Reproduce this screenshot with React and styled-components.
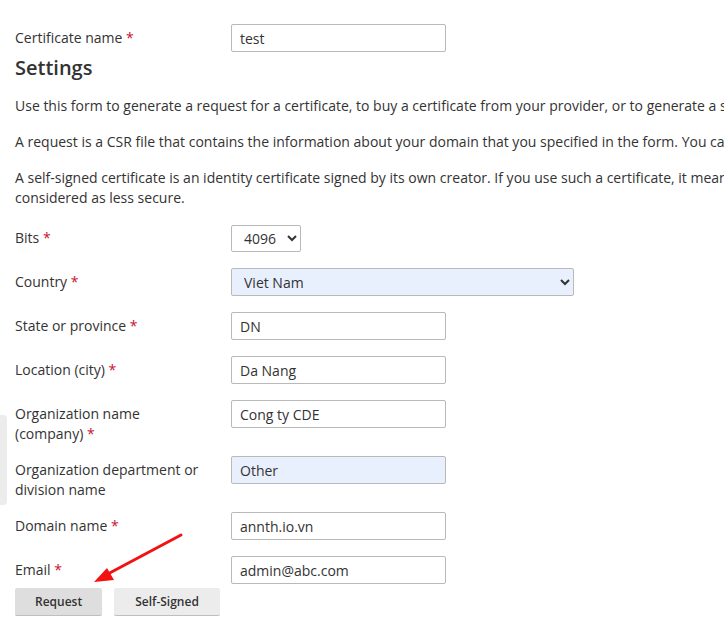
import styled, { createGlobalStyle } from "styled-components"

const Global = createGlobalStyle`
body {
    margin: 0;
    overflow: hidden;
    background: #fff;
    font-family: "Open Sans", "Liberation Sans", sans-serif;
    color: #333;
}
`

export const Page = styled.div`
position: relative;
width: 1100px;
padding: 24px 15px 20px 15px;
box-sizing: border-box;
font-size: 14px;
line-height: 20px;
`

export const Row = styled.div`
display: flex;
align-items: flex-start;
min-height: 32px;
padding-bottom: ${props => (props.last ? "0" : "12px")};
`

export const Label = styled.div`
width: 216px;
padding-top: 4px;
flex-shrink: 0;
span{
    color: #c8102e;
}
`

export const Input = styled.input`
width: 215px;
height: 28px;
box-sizing: border-box;
border: 1px solid #b9b9b9;
border-radius: 2px;
padding: 0 8px;
font-family: inherit;
font-size: 14px;
color: #333;
background: ${props => (props.filled ? "#e8f0fe" : "#fff")};
outline: none;
`

export const Select = styled.select`
width: ${props => props.w}px;
height: ${props => props.h || 28}px;
margin-top: ${props => props.offset || 0}px;
box-sizing: border-box;
border: 1px solid #b9b9b9;
border-radius: 2px;
padding: 0 4px 0 8px;
font-family: inherit;
font-size: 14px;
color: #333;
background: ${props => (props.filled ? "#e8f0fe" : "#fff")};
outline: none;
`

export const Heading = styled.h2`
margin: 0 0 16px 0;
font-size: 20px;
line-height: 24px;
font-weight: 600;
`

export const Para = styled.p`
margin: 0 0 16px 0;
width: ${props => props.w || "auto"};
`

export const Fields = styled.div`
margin-top: 16px;
`

export const Buttons = styled.div`
display: flex;
gap: 12px;
`

export const Button = styled.button`
height: 28px;
padding: 0 ${props => props.px}px;
border: none;
border-bottom: 1px solid #bfbfbf;
border-radius: 2px;
background-color: ${props => (props.primary ? "#dedede" : "#ececec")};
font-family: inherit;
font-size: 12px;
font-weight: 600;
color: #333;
`

export const SideTab = styled.div`
position: absolute;
left: 0;
top: 415px;
width: 7px;
height: 90px;
background: #ececec;
border-radius: 0 4px 4px 0;
`

export const Arrow = styled.svg`
position: absolute;
left: 0;
top: 0;
pointer-events: none;
`

const Req = () => <span> *</span>

export default function App(){
    return(<><Global />
    <Page>
        <Row last>
            <Label>Certificate name<Req /></Label>
            <Input defaultValue="test" />
        </Row>
        <Heading>Settings</Heading>
        <Para>Use this form to generate a request for a certificate, to buy a certificate from your provider, or to generate a self-signed certificate.</Para>
        <Para>A request is a CSR file that contains the information about your domain that you specified in the form. You can submit it to a certificate authority.</Para>
        <Para w="900px">A self-signed certificate is an identity certificate signed by its own creator. If you use such a certificate, it means that your website is considered as less secure.</Para>
        <Fields>
            <Row>
                <Label>Bits<Req /></Label>
                <Select w={70} h={27} offset={1} defaultValue="4096"><option>2048</option><option>4096</option></Select>
            </Row>
            <Row>
                <Label>Country<Req /></Label>
                <Select w={343} filled defaultValue="Viet Nam"><option>Viet Nam</option></Select>
            </Row>
            <Row>
                <Label>State or province<Req /></Label>
                <Input defaultValue="DN" />
            </Row>
            <Row>
                <Label>Location (city)<Req /></Label>
                <Input defaultValue="Da Nang" />
            </Row>
            <Row>
                <Label>Organization name<br />(company)<Req /></Label>
                <Input defaultValue="Cong ty CDE" />
            </Row>
            <Row>
                <Label>Organization department or<br />division name</Label>
                <Input filled defaultValue="Other" />
            </Row>
            <Row>
                <Label>Domain name<Req /></Label>
                <Input defaultValue="annth.io.vn" />
            </Row>
            <Row last>
                <Label>Email<Req /></Label>
                <Input defaultValue="admin@abc.com" />
            </Row>
        </Fields>
        <Buttons>
            <Button primary px={20}>Request</Button>
            <Button px={21}>Self-Signed</Button>
        </Buttons>
        <SideTab />
        <Arrow width="300" height="639">
            <line x1="181" y1="535" x2="104" y2="576" stroke="#f21212" strokeWidth="3" strokeLinecap="round" />
            <polygon points="94,582 107,568 114,580" fill="#f21212" />
        </Arrow>
    </Page></>)
}
